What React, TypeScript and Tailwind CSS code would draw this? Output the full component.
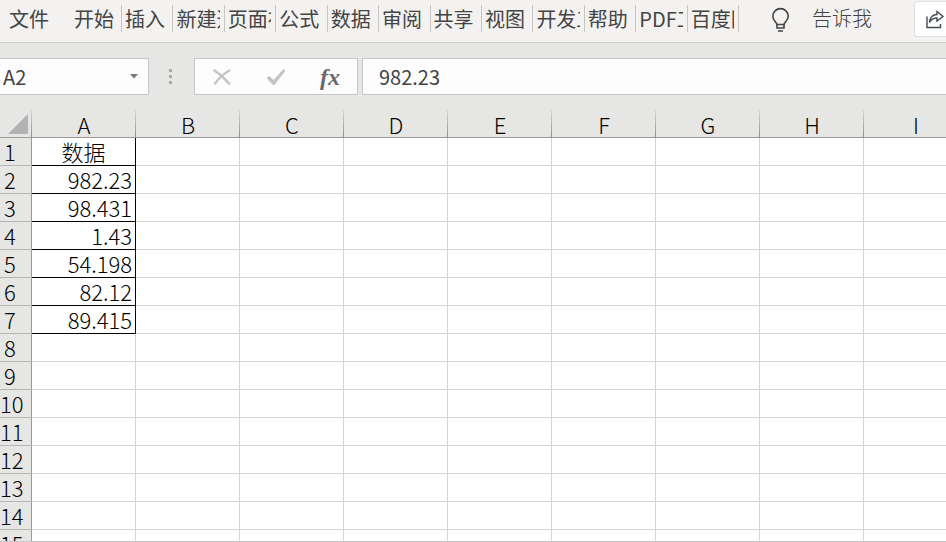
import React, { useState } from 'react';
import clsx from 'clsx';

const tabs = ['插入', '新建选项卡', '页面布局', '公式', '数据', '审阅', '共享', '视图', '开发工具', '帮助', 'PDF工具集', '百度网盘'];
const columns = ['A', 'B', 'C', 'D', 'E', 'F', 'G', 'H', 'I'];
const rows = Array.from({ length: 15 }, (_, i) => i + 1);
const values = ['数据', '982.23', '98.431', '1.43', '54.198', '82.12', '89.415'];

function Ribbon() {
  return (
    <nav className="flex h-[43px] shrink-0 items-start overflow-hidden border-b border-[#d0d0ce] bg-[#f3f2f0] text-[20px] leading-[27px] text-[#444444]">
      <div className="flex min-w-0 flex-1 pt-[5px]">
        <button className="w-[65px] shrink-0 pl-[9px] text-left">文件</button>
        <button className="w-[57px] shrink-0 border-r border-[#c8c6c4] pl-[9px] text-left">开始</button>
        <div className="flex w-[617px] shrink-0">
          {tabs.map((tab) => (
            <button key={tab} className="flex-1 basis-0 overflow-hidden border-r border-[#c8c6c4] pr-1 pl-[3px] text-left">
              <span className="block overflow-hidden whitespace-nowrap">{tab}</span>
            </button>
          ))}
        </div>
        <button className="flex shrink-0 items-start gap-[19px] pl-[30px] leading-[25px] font-light">
          <svg className="h-[27px] w-[24px]" viewBox="0 0 24 27" fill="none" stroke="#444444" strokeWidth="1.6">
            <path d="M8 19.500c0-2-4.200-4-4.200-8.200a7.700 7.700 0 0 1 15.400 0c0 4.200-4.200 6.200-4.200 8.200z" />
            <path d="M8 19v4h7v-4M9 26h5" />
          </svg>
          告诉我
        </button>
      </div>
      <button aria-label="共享" className="mt-px flex h-9 w-8 shrink-0 items-center rounded-l border border-r-0 border-[#e1dfdd] bg-white pl-[11px]">
        <svg className="h-5 w-5 shrink-0" viewBox="0 0 20 20" fill="none" stroke="#444c55" strokeWidth="1.4">
          <path d="M1 7.500V18.500h13.500V15" />
          <path d="M3.500 13.500C4 9 6.500 5.500 11 5.500V2.500L17 7.500l-6 4.500V9C8 9 5.500 10 3.500 13.500z" />
        </svg>
      </button>
    </nav>
  );
}

function FormulaBar({ value, onChange }: { value: string; onChange: (value: string) => void }) {
  return (
    <div className="flex h-[52px] shrink-0 pt-[15px] text-[20px] text-[#444444]">
      <div className="flex w-[149px] shrink-0 items-center border border-l-0 border-[#c6c6c6] bg-[#fdfdfd] pr-[10px] pl-[3px]">
        <input aria-label="名称框" defaultValue="A2" className="w-full min-w-0 outline-none" />
        <svg className="h-[5px] w-[8px] shrink-0" viewBox="0 0 8 5" fill="#777777">
          <path d="M0 0h8L4 4.500z" />
        </svg>
      </div>
      <div className="mr-0.5 flex w-[43px] shrink-0 flex-col items-center justify-center gap-[3px]">
        <span className="size-[3px] bg-[#aaaaaa]" />
        <span className="size-[3px] bg-[#aaaaaa]" />
        <span className="size-[3px] bg-[#aaaaaa]" />
      </div>
      <div className="mr-1 flex w-[164px] shrink-0 items-center justify-between border border-[#c6c6c6] bg-[#fdfdfd] px-[17px]">
        <button aria-label="取消">
          <svg className="h-[18px] w-[20px]" viewBox="0 0 20 18" fill="none" stroke="#c4c4c4" strokeLinecap="round">
            <path d="M2.500 2.500C7 5.500 12 10 17 15.500" strokeWidth="2.600" />
            <path d="M17.500 2.500C11 6 7 10 3 15.500" strokeWidth="2.200" />
          </svg>
        </button>
        <button aria-label="输入">
          <svg className="h-[18px] w-[20px]" viewBox="0 0 20 18" fill="#c4c4c4">
            <path d="M0.500 10 3.500 8l4 4L17.500 1l2 1.500L8.500 17H7z" />
          </svg>
        </button>
        <button className="font-['Liberation_Serif',serif] text-[24px] leading-7 font-bold text-[#6a6a6a] italic">fx</button>
      </div>
      <input
        aria-label="编辑栏"
        value={value}
        onChange={(e) => onChange(e.target.value)}
        className="min-w-0 flex-1 border border-r-0 border-[#c6c6c6] bg-[#fdfdfd] pl-4 outline-none"
      />
    </div>
  );
}

const headerLine = 'bg-[linear-gradient(#d4d4d2,#8f8f8f)] bg-[length:1px_100%] bg-right bg-no-repeat';

function Sheet({ cells }: { cells: string[] }) {
  return (
    <div className="min-h-0 flex-1 overflow-hidden border-b border-[#c6c6c6] pt-[15px]">
      <table className="w-[968px] table-fixed border-separate border-spacing-0 bg-white text-[22px] leading-[27px] font-light text-black">
        <thead>
          <tr className="h-7 bg-[#e6e6e4]">
            <th className={clsx('w-8 border-b border-[#999999] p-0', headerLine)}>
              <svg className="ml-2 h-5 w-5" viewBox="0 0 20 20" fill="#b2b4b3">
                <path d="M20 0v20H0z" />
              </svg>
            </th>
            {columns.map((name) => (
              <th key={name} className={clsx('w-[104px] border-b border-[#999999] p-0 pt-0.5 leading-[25px] font-light', headerLine)}>
                {name}
              </th>
            ))}
          </tr>
        </thead>
        <tbody>
          {rows.map((row, i) => (
            <tr key={row} className="h-7">
              <th
                className={clsx(
                  'border-r border-b border-r-[#999999] border-b-[#b5b5b5] bg-[#e6e6e4] p-0 text-left font-light',
                  row < 10 && 'pl-1',
                )}
              >
                {row}
              </th>
              {columns.map((name, c) => {
                const filled = c === 0 && i < cells.length;
                return (
                  <td
                    key={name}
                    className={clsx(
                      'border-r border-b p-0',
                      filled ? 'border-black' : 'border-[#d4d4d4]',
                      filled && (i === 0 ? 'text-center' : 'pr-[3px] text-right'),
                    )}
                  >
                    {filled && cells[i]}
                  </td>
                );
              })}
            </tr>
          ))}
        </tbody>
      </table>
    </div>
  );
}

export default function App() {
  const [value, setValue] = useState('982.23');
  const cells = values.map((v, i) => (i === 1 ? value : v));

  return (
    <div className="flex h-screen w-full flex-col overflow-hidden bg-[#e6e6e4] font-['Noto_Sans_CJK_SC',sans-serif]">
      <Ribbon />
      <FormulaBar value={value} onChange={setValue} />
      <Sheet cells={cells} />
    </div>
  );
}
